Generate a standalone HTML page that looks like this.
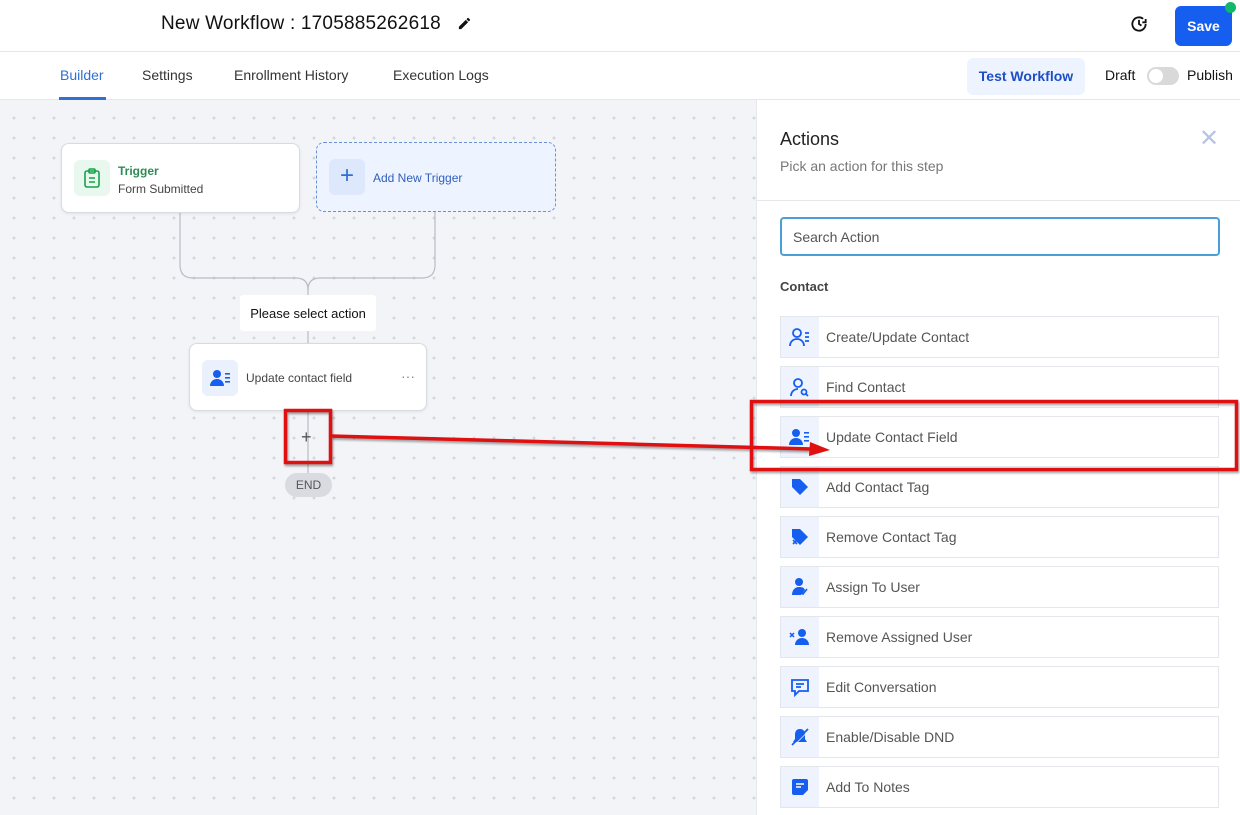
<!DOCTYPE html>
<html><head><style>
*{box-sizing:border-box;margin:0;padding:0}
body{width:1240px;height:815px;overflow:hidden;font-family:"Liberation Sans",Arial,sans-serif;background:#fff;position:relative;color:#111}
.abs{position:absolute}
#hdr{left:0;top:0;width:1240px;height:52px;border-bottom:1px solid #e5e7eb;background:#fff}
#tabs{left:0;top:52px;width:1240px;height:48px;border-bottom:1px solid #e5e7eb;background:#fff}
.tab{position:absolute;top:15px;font-size:14px;color:#333}
#canvas{left:0;top:100px;width:756px;height:715px;background-color:#f2f4f8;background-image:radial-gradient(circle,#d3d6dd 1.4px,transparent 1.5px);background-size:20px 20px;background-position:4px 8px}
#panel{left:756px;top:100px;width:484px;height:715px;background:#fff;border-left:1px solid #e5e7eb}
.item{position:absolute;left:23px;width:439px;height:42px;border:1px solid #e3e6ea;background:#fff}
.item .ic{position:absolute;left:0;top:0;width:38px;height:40px;background:#eef3fd;display:flex;align-items:center;justify-content:center}
.item span{position:absolute;left:45px;top:12px;font-size:14px;color:#555}
.card{position:absolute;background:#fff;border:1px solid #d8dbe0;border-radius:8px;box-shadow:0 1px 3px rgba(0,0,0,.08)}
</style></head><body>
<div id="hdr" class="abs">
 <div class="abs" style="left:161px;top:13px;font-size:19px;color:#111;letter-spacing:0.2px">New Workflow : 1705885262618</div>
 <svg class="abs" style="left:457px;top:16px" width="15" height="15" viewBox="0 0 24 24"><path d="M3 17.25V21h3.75L17.8 9.94l-3.75-3.75L3 17.25zM20.7 7.04a1 1 0 000-1.41l-2.34-2.34a1 1 0 00-1.41 0l-1.83 1.83 3.75 3.75 1.83-1.83z" fill="#111"/></svg>
 <svg class="abs" style="left:1129px;top:14px" width="20" height="20" viewBox="0 0 24 24" fill="none" stroke="#111" stroke-width="2.2"><path d="M20 12a8 8 0 1 1-3-6.2"/><path d="M12 7v5l3 2"/><path d="M20 6v4h-4" /></svg>
 <div class="abs" style="left:1175px;top:6px;width:57px;height:40px;background:#155eef;border-radius:6px;color:#fff;font-weight:bold;font-size:14px;text-align:center;line-height:40px">Save</div>
 <div class="abs" style="left:1225px;top:2px;width:11px;height:11px;border-radius:50%;background:#12b76a"></div>
</div>
<div id="tabs" class="abs">
 <div class="tab" style="left:60px;color:#2f6fd6">Builder</div>
 <div class="abs" style="left:59px;top:45px;width:47px;height:3px;background:#2f6fd6"></div>
 <div class="tab" style="left:142px">Settings</div>
 <div class="tab" style="left:234px">Enrollment History</div>
 <div class="tab" style="left:393px">Execution Logs</div>
 <div class="abs" style="left:967px;top:6px;width:118px;height:37px;background:#eef4ff;border-radius:6px;color:#1d4fc4;font-weight:bold;font-size:14px;text-align:center;line-height:37px">Test Workflow</div>
 <div class="tab" style="left:1105px;color:#111">Draft</div>
 <div class="abs" style="left:1147px;top:15px;width:32px;height:18px;border-radius:9px;background:#d9d9d9"><div style="position:absolute;left:2px;top:2px;width:14px;height:14px;border-radius:50%;background:#fff"></div></div>
 <div class="tab" style="left:1187px;color:#111">Publish</div>
</div>
<div id="canvas" class="abs">
 <svg class="abs" style="left:0;top:0" width="756" height="715">
  <g fill="none" stroke="#b8bcc4" stroke-width="1.2">
   <path d="M180 112 V165 Q180 178 193 178 H296 Q308 178 308 190 V195"/>
   <path d="M435 111 V165 Q435 178 422 178 H320 Q308 178 308 190"/>
   <path d="M308 231 V243"/>
   <path d="M308 310 V373"/>
  </g>
 </svg>
 <div class="card" style="left:61px;top:43px;width:239px;height:70px">
  <div class="abs" style="left:12px;top:16px;width:36px;height:36px;background:#e9f8ef;border-radius:6px"></div>
  <svg class="abs" style="left:21px;top:24px" width="18" height="20" viewBox="0 0 18 20" fill="none" stroke="#16a34a" stroke-width="1.6"><rect x="2" y="3" width="14" height="16" rx="2"/><rect x="6" y="1" width="6" height="4" rx="1"/><path d="M6 10h6M6 14h6"/></svg>
  <div class="abs" style="left:56px;top:20px;font-size:12px;font-weight:bold;color:#2f8a55">Trigger</div>
  <div class="abs" style="left:56px;top:38px;font-size:12px;color:#444">Form Submitted</div>
 </div>
 <div class="abs" style="left:316px;top:42px;width:240px;height:70px;border:1px dashed #6b8fd6;border-radius:8px;background:#eef4ff">
  <div class="abs" style="left:12px;top:16px;width:36px;height:36px;background:#dde8fc;border-radius:6px;color:#2f6fd6;font-size:24px;text-align:center;line-height:34px">+</div>
  <div class="abs" style="left:56px;top:28px;font-size:12px;color:#2f5fbf">Add New Trigger</div>
 </div>
 <div class="abs" style="left:240px;top:195px;width:136px;height:36px;background:#fff;border-radius:3px;font-size:13px;text-align:center;line-height:38px;color:#111">Please select action</div>
 <div class="card" style="left:189px;top:243px;width:238px;height:68px">
  <div class="abs" style="left:12px;top:16px;width:36px;height:36px;background:#eaf1fd;border-radius:6px"></div>
  <svg class="abs" style="left:20px;top:25px" width="22" height="18" viewBox="0 0 22 18" fill="#155eef"><circle cx="7" cy="5" r="4"/><path d="M0 17c0-4 3-7 7-7s7 3 7 7z"/><rect x="15" y="4" width="5" height="1.6"/><rect x="15" y="8" width="5" height="1.6"/><rect x="15" y="12" width="5" height="1.6"/></svg>
  <div class="abs" style="left:56px;top:27px;font-size:12px;color:#444">Update contact field</div>
  <div class="abs" style="left:211px;top:24px;font-size:14px;color:#888">···</div>
 </div>
 <div class="abs" style="left:301px;top:327px;font-size:18px;color:#555">+</div>
 <div class="abs" style="left:285px;top:373px;width:47px;height:24px;background:#d9dbe0;border-radius:12px;font-size:12px;color:#555;text-align:center;line-height:24px">END</div>
</div>
<div id="panel" class="abs">
 <div class="abs" style="left:23px;top:29px;font-size:18px;color:#222">Actions</div>
 <div class="abs" style="left:23px;top:58px;font-size:14px;color:#777">Pick an action for this step</div>
 <div class="abs" style="left:442px;top:28px;font-size:24px;color:#b8c4e0;line-height:22px">✕</div>
 <div class="abs" style="left:0;top:100px;width:484px;height:1px;background:#e5e7eb"></div>
 <div class="abs" style="left:23px;top:117px;width:440px;height:39px;border:2px solid #4a9fd8;border-radius:4px;font-size:14px;color:#555;padding:10px 11px">Search Action</div>
 <div class="abs" style="left:23px;top:179px;font-size:13px;font-weight:bold;color:#444">Contact</div>
 <div class="item" style="top:216px"><div class="ic"><svg width="22" height="20" viewBox="0 0 22 20" fill="none" stroke="#155eef" stroke-width="1.8"><circle cx="8" cy="6" r="4"/><path d="M1 19c0-4 3-7 7-7s7 3 7 7"/><path d="M16 6h4M16 10h4M16 14h4"/></svg></div><span>Create/Update Contact</span></div>
 <div class="item" style="top:266px"><div class="ic"><svg width="20" height="20" viewBox="0 0 20 20" fill="none" stroke="#155eef" stroke-width="1.8"><circle cx="8" cy="6" r="4"/><path d="M1 19c0-4 3-7 7-7"/><circle cx="14" cy="15" r="2.5"/><path d="M16 17l2 2"/></svg></div><span>Find Contact</span></div>
 <div class="item" style="top:316px"><div class="ic"><svg width="22" height="18" viewBox="0 0 22 18" fill="#155eef"><circle cx="7" cy="5" r="4"/><path d="M0 17c0-4 3-7 7-7s7 3 7 7z"/><rect x="15" y="4" width="5" height="1.6"/><rect x="15" y="8" width="5" height="1.6"/><rect x="15" y="12" width="5" height="1.6"/></svg></div><span>Update Contact Field</span></div>
 <div class="item" style="top:366px"><div class="ic"><svg width="20" height="20" viewBox="0 0 20 20" fill="#155eef"><path d="M2 2h8l8 8-8 8-8-8z"/></svg></div><span>Add Contact Tag</span></div>
 <div class="item" style="top:416px"><div class="ic"><svg width="20" height="20" viewBox="0 0 20 20"><path d="M2 2h8l8 8-8 8-8-8z" fill="#155eef"/><path d="M3 13l4 4M7 13l-4 4" stroke="#155eef" stroke-width="1.6"/></svg></div><span>Remove Contact Tag</span></div>
 <div class="item" style="top:466px"><div class="ic"><svg width="20" height="20" viewBox="0 0 20 20" fill="#155eef"><circle cx="9" cy="5" r="4"/><path d="M2 18c0-5 3-8 7-8s5 1 6 3l-4 5z"/><path d="M11 15l2 2 4-5" stroke="#155eef" stroke-width="1.6" fill="none"/></svg></div><span>Assign To User</span></div>
 <div class="item" style="top:516px"><div class="ic"><svg width="22" height="18" viewBox="0 0 22 18" fill="#155eef"><circle cx="13" cy="5" r="4"/><path d="M6 17c0-4 3-7 7-7s7 3 7 7z"/><path d="M1 5l4 4M5 5l-4 4" stroke="#155eef" stroke-width="1.5"/></svg></div><span>Remove Assigned User</span></div>
 <div class="item" style="top:566px"><div class="ic"><svg width="20" height="20" viewBox="0 0 20 20" fill="none" stroke="#155eef" stroke-width="1.8"><path d="M2 3h16v11H9l-4 4v-4H2z"/><path d="M6 7h8M6 10h5"/></svg></div><span>Edit Conversation</span></div>
 <div class="item" style="top:616px"><div class="ic"><svg width="20" height="20" viewBox="0 0 20 20"><path d="M10 2c-4 0-5 3-5 6v4l-2 3h14l-2-3V8c0-3-1-6-5-6z" fill="#155eef"/><path d="M2 18L18 2" stroke="#155eef" stroke-width="1.8"/><path d="M2 18L18 2" stroke="#eef3fd" stroke-width=".8" transform="translate(1.5,1)"/></svg></div><span>Enable/Disable DND</span></div>
 <div class="item" style="top:666px"><div class="ic"><svg width="18" height="18" viewBox="0 0 18 18"><path d="M3 1h12a2 2 0 012 2v9l-5 5H3a2 2 0 01-2-2V3a2 2 0 012-2z" fill="#155eef"/><path d="M5 6h8M5 9h5" stroke="#fff" stroke-width="1.6"/></svg></div><span>Add To Notes</span></div>
</div>
<svg class="abs" style="left:0;top:0" width="1240" height="815">
 <g fill="none" stroke="#e01010" stroke-width="3.5" style="filter:drop-shadow(1px 2px 1px rgba(0,0,0,.35))">
  <rect x="285.5" y="410.5" width="45" height="52"/>
  <rect x="751.5" y="401.5" width="485" height="68"/>
  <path d="M331 436 L812 449"/>
 </g>
 <path d="M810 442 L830 450 L809 456 z" fill="#e01010"/>
</svg>
</body></html>
